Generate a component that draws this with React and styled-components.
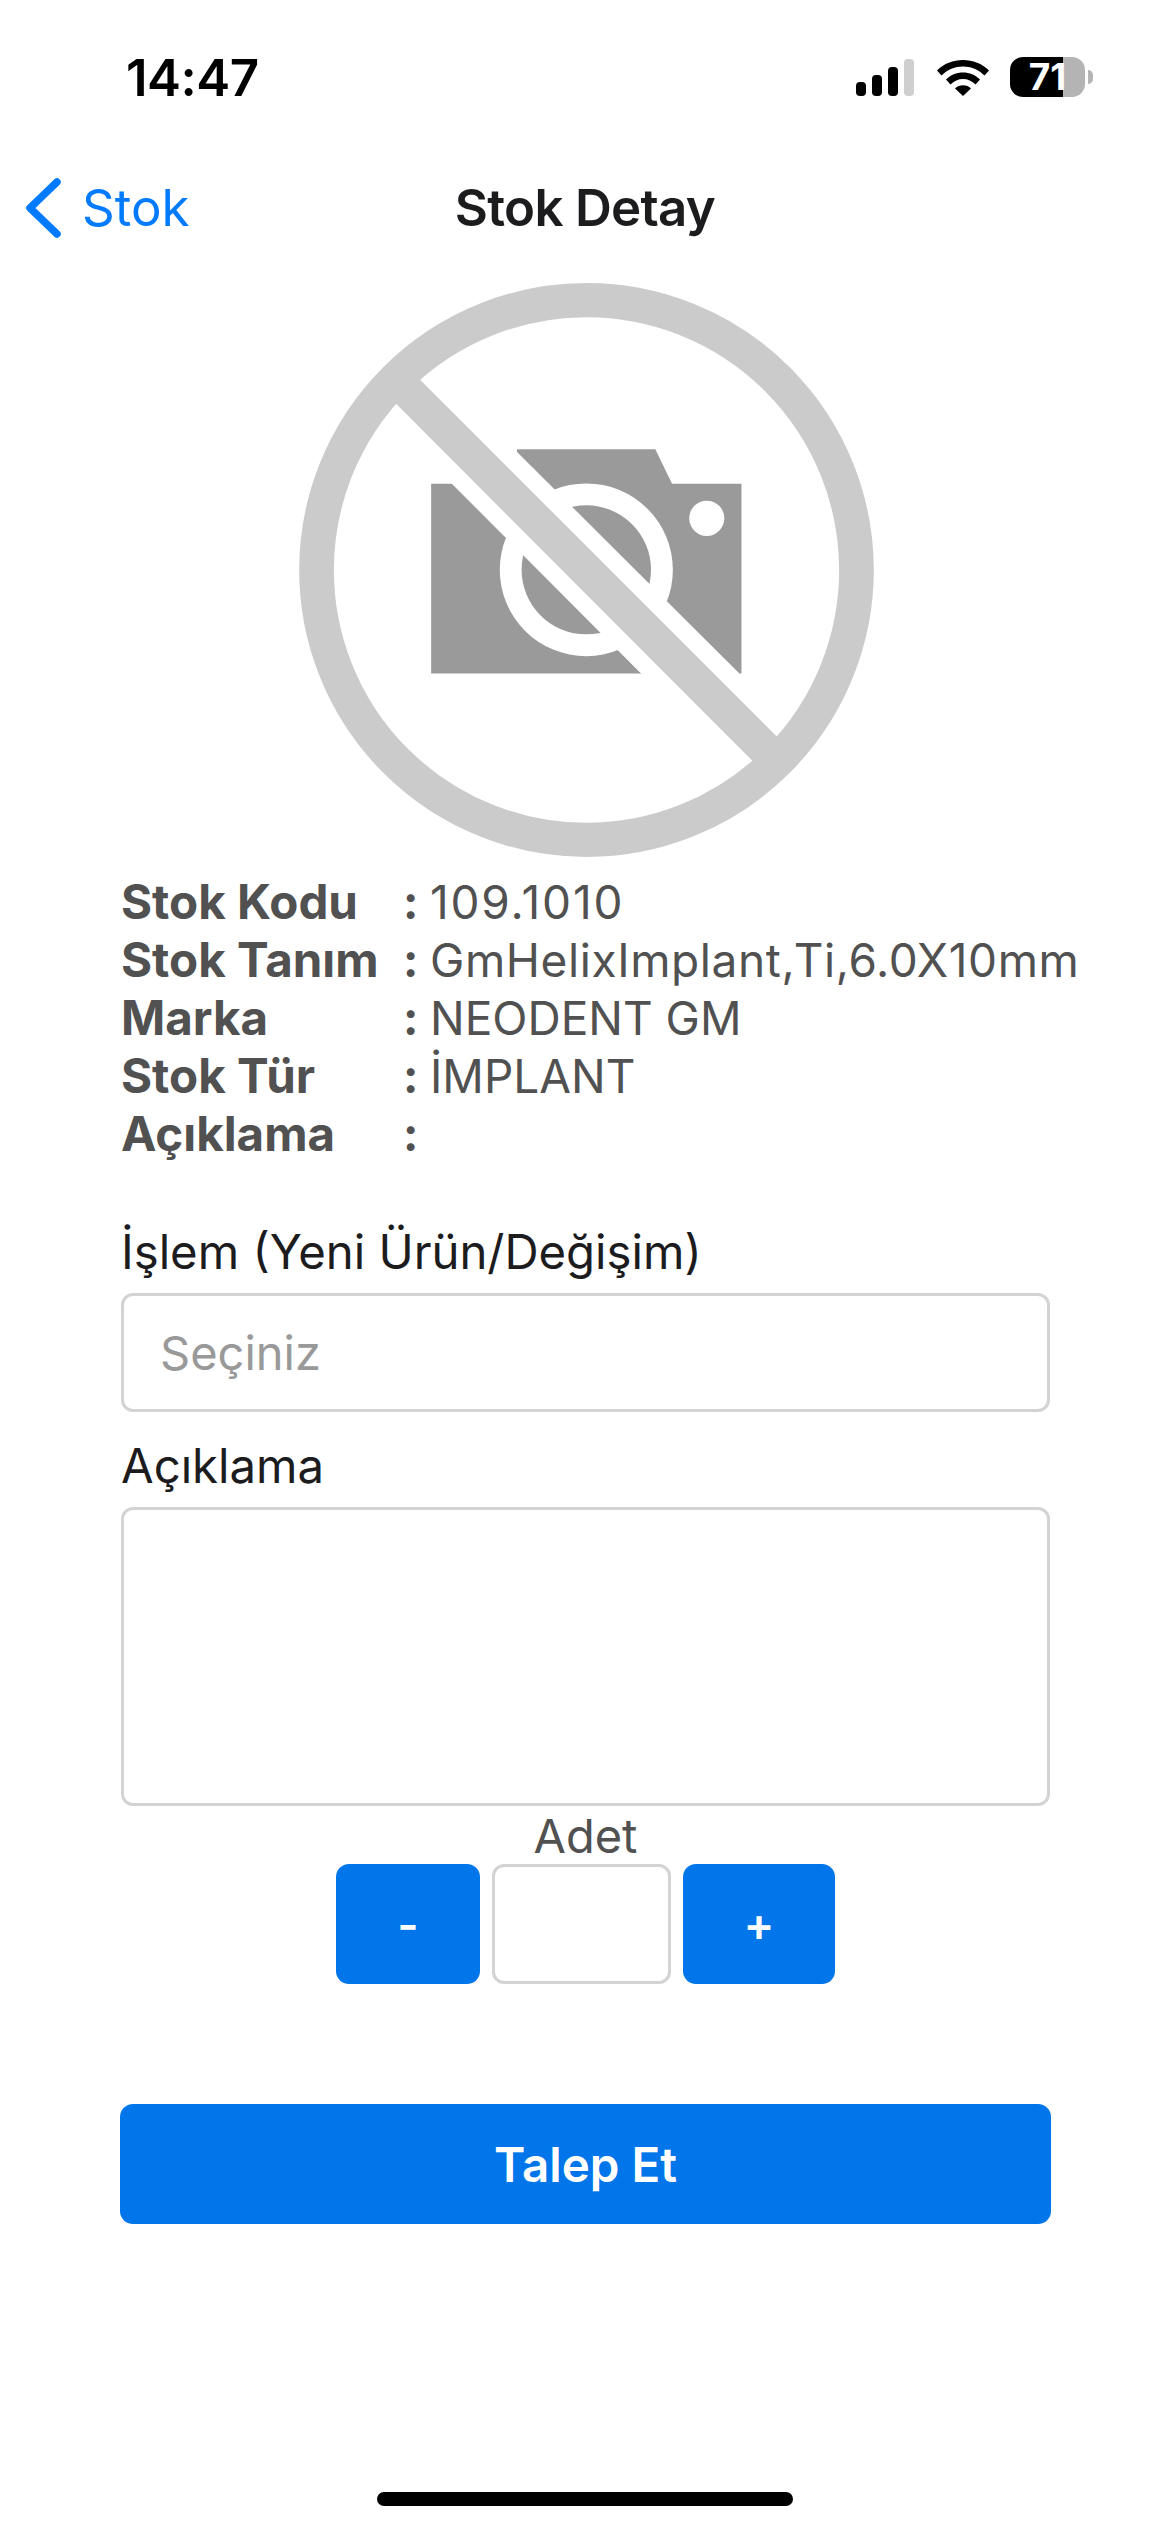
import React from "react";
import styled, { createGlobalStyle } from "styled-components";

const Global = createGlobalStyle`
  html, body { margin: 0; padding: 0; background: #fff; }
  body { font-family: Inter, "Noto Sans", "Liberation Sans", sans-serif; }
  * { box-sizing: border-box; }
`;

const Screen = styled.div`
  width: 1170px;
  height: 2532px;
  background: #fff;
  display: flex;
  flex-direction: column;
  overflow: hidden;
`;

const StatusBar = styled.header`
  height: 150px;
  padding: 50px 85px 0 126px;
  display: flex;
  justify-content: space-between;
  align-items: flex-start;
`;

const Clock = styled.div`
  font-size: 51px;
  line-height: 56px;
  font-weight: 600;
  color: #000;
  letter-spacing: -0.5px;
`;

const StatusIcons = styled.div`
  display: flex;
  align-items: center;
  height: 40px;
  margin-top: 7px;
`;

const Battery = styled.div`
  position: relative;
  width: 75px;
  height: 40px;
  margin-left: 21px;
  border-radius: 13px;
  background: linear-gradient(90deg, #000 0 53px, #b4b4b4 53px 100%);
  color: #fff;
  font-size: 37px;
  line-height: 40px;
  font-weight: 700;
  text-align: center;
  &::after {
    content: "";
    position: absolute;
    right: -8px;
    top: 13px;
    width: 5px;
    height: 14px;
    border-radius: 0 7px 7px 0;
    background: #b4b4b4;
  }
`;

const NavBar = styled.nav`
  height: 116px;
  position: relative;
  display: flex;
  align-items: center;
  justify-content: center;
`;

const BackLink = styled.a`
  position: absolute;
  left: 24px;
  top: 26px;
  display: flex;
  align-items: center;
  gap: 20px;
  color: #007aff;
  font-size: 51px;
  line-height: 64px;
`;

const NavTitle = styled.h1`
  margin: 0;
  font-size: 51px;
  line-height: 58px;
  font-weight: 600;
  color: #1c1c1e;
  letter-spacing: -0.7px;
`;

const Placeholder = styled.svg`
  display: block;
  width: 575px;
  height: 574px;
  margin: 17px 0 0 299px;
`;

const Content = styled.main`
  padding: 0 120px 0 121px;
  display: flex;
  flex-direction: column;
`;

const InfoList = styled.dl`
  margin: 16px -60px 0 0;
  display: grid;
  grid-template-columns: 282px 27px 1fr;
  font-size: 46px;
  line-height: 58px;
  color: #515151;
`;

const InfoLabel = styled.dt`
  font-size: 47.5px;
  font-weight: 700;
  white-space: nowrap;
`;

const InfoColon = styled.span`
  font-weight: 700;
`;

const InfoValue = styled.dd`
  margin: 0;
  white-space: nowrap;
  letter-spacing: ${(p) => p.$track || 0}px;
`;

const FieldLabel = styled.label`
  display: block;
  font-size: 47.3px;
  line-height: 58px;
  color: #1c1c1e;
  margin-top: ${(p) => p.$top}px;
  margin-bottom: ${(p) => p.$bottom}px;
`;

const TextInput = styled.input`
  display: block;
  width: 100%;
  height: 119px;
  border: 3px solid #d3d3d3;
  border-radius: 12px;
  padding: 0 36px;
  font: inherit;
  font-size: 47px;
  background: #fff;
  &::placeholder { color: #999; opacity: 1; }
`;

const TextArea = styled.textarea`
  display: block;
  width: 100%;
  height: 299px;
  border: 3px solid #d3d3d3;
  border-radius: 12px;
  resize: none;
  background: #fff;
`;

const QtyLabel = styled.div`
  text-align: center;
  font-size: 47px;
  line-height: 56px;
  padding-top: 2px;
  color: #515151;
`;

const QtyRow = styled.div`
  display: flex;
  margin-left: 215px;
  height: 120px;
`;

const QtyButton = styled.button`
  width: ${(p) => p.$w}px;
  height: 120px;
  border: 0;
  border-radius: 13px;
  background: #0076ea;
  color: #fff;
  font: inherit;
  font-size: 46px;
  font-weight: 600;
  padding: 0;
`;

const QtyInput = styled.input`
  width: 179px;
  height: 120px;
  margin: 0 12px;
  border: 3px solid #d3d3d3;
  border-radius: 12px;
  background: #fff;
`;

const SubmitButton = styled.button`
  display: block;
  width: calc(100% + 2px);
  height: 120px;
  margin: 120px 0 0 -1px;
  border: 0;
  border-radius: 13px;
  background: #0076ea;
  color: #fff;
  font: inherit;
  font-size: 47.5px;
  font-weight: 600;
`;

const HomeBar = styled.div`
  width: 416px;
  height: 14px;
  margin: 268px auto 0;
  border-radius: 7px;
  background: #000;
`;

const rows = [
  { label: "Stok Kodu", value: "109.1010", track: 1.8 },
  { label: "Stok Tanım", value: "GmHelixImplant,Ti,6.0X10mm", track: 0.6 },
  { label: "Marka", value: "NEODENT GM" },
  { label: "Stok Tür", value: "İMPLANT" },
  { label: "Açıklama", value: "" },
];

export default function App() {
  return (
    <Screen>
      <Global />
      <StatusBar>
        <Clock>14:47</Clock>
        <StatusIcons>
          <svg width="58" height="37" viewBox="0 0 58 37">
            <rect x="0" y="23" width="10" height="14" rx="4" fill="#000" />
            <rect x="16" y="16" width="10" height="21" rx="4" fill="#000" />
            <rect x="32" y="8" width="10" height="29" rx="4" fill="#000" />
            <rect x="48" y="0" width="10" height="37" rx="4" fill="#cfcfcf" />
          </svg>
          <svg width="52" height="37" viewBox="0 0 52 37" style={{ marginLeft: 23 }}>
            <path d="M0 11.5C7 4.5 16 1 26 1s19 3.5 26 10.500l-4.500 5C41.500 10.500 34 7.500 26 7.500S10.500 10.500 4.500 16.500z" fill="#000" />
            <path d="M9 20.500C13.500 16 19.500 13.500 26 13.500s12.500 2.500 17 7l-4.500 5C35 22 30.700 20 26 20s-9 2-12.500 5.500z" fill="#000" />
            <path d="M18 29.500C20 27.500 23 26.300 26 26.300s6 1.200 8 3.200L26 37z" fill="#000" />
          </svg>
          <Battery>71</Battery>
        </StatusIcons>
      </StatusBar>

      <NavBar>
        <BackLink>
          <svg width="38" height="62" viewBox="0 0 38 62">
            <path d="M33 5L6 31l27 26" fill="none" stroke="#007aff" strokeWidth="7.500" strokeLinecap="round" strokeLinejoin="round" />
          </svg>
          Stok
        </BackLink>
        <NavTitle>Stok Detay</NavTitle>
      </NavBar>

      <Placeholder viewBox="48 35 1475 1495" preserveAspectRatio="none" aria-label="Görsel yok">
        <path d="M387 558H607V468H962L1005 558H1183V1052H387z" fill="#9a9a9a" />
        <ellipse cx="785" cy="782" rx="222" ry="225" fill="#fff" />
        <ellipse cx="785" cy="782" rx="166" ry="168" fill="#9a9a9a" />
        <ellipse cx="1094" cy="648" rx="45" ry="46" fill="#fff" />
        <path d="M300 164L1300 1176V1434L300 415z" fill="#fff" />
        <path d="M607 400V475L300 164V400z" fill="#fff" />
        <ellipse cx="785.500" cy="782.500" rx="692.500" ry="703" fill="none" stroke="#cbcbcb" strokeWidth="89" />
        <path d="M330 258L1300 1243L1250 1319L260 312z" fill="#cbcbcb" />
      </Placeholder>

      <Content>
        <InfoList>
          {rows.map((row) => (
            <React.Fragment key={row.label}>
              <InfoLabel>{row.label}</InfoLabel>
              <InfoColon>:</InfoColon>
              <InfoValue $track={row.track}>{row.value}</InfoValue>
            </React.Fragment>
          ))}
        </InfoList>

        <FieldLabel $top={60} $bottom={12}>İşlem (Yeni Ürün/Değişim)</FieldLabel>
        <TextInput placeholder="Seçiniz" />

        <FieldLabel $top={25} $bottom={12}>Açıklama</FieldLabel>
        <TextArea />

        <QtyLabel>Adet</QtyLabel>
        <QtyRow>
          <QtyButton $w={144}>-</QtyButton>
          <QtyInput />
          <QtyButton $w={152}>+</QtyButton>
        </QtyRow>

        <SubmitButton>Talep Et</SubmitButton>
      </Content>

      <HomeBar />
    </Screen>
  );
}
